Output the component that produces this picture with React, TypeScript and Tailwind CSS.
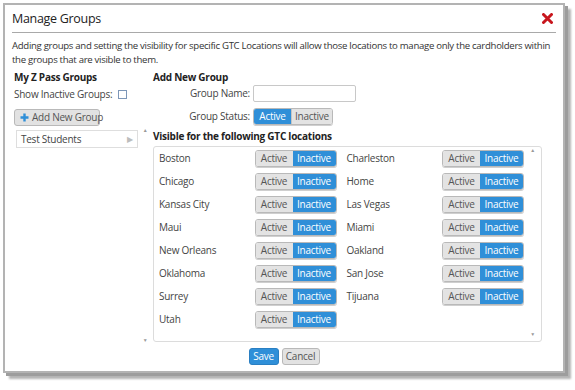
import React from "react";

const left = ["Boston", "Chicago", "Kansas City", "Maui", "New Orleans", "Oklahoma", "Surrey", "Utah"];
const right = ["Charleston", "Home", "Las Vegas", "Miami", "Oakland", "San Jose", "Tijuana"];

// two-part Active / Inactive switch
const Toggle = ({ active = false, wA = 37, wI = 43 }: { active?: boolean; wA?: number; wI?: number }) => (
  <div className="flex h-[17px] rounded-[3px] overflow-hidden border border-[#b9b9b9] shadow-[0_1px_0_#cfcfcf]">
    <div
      style={{ width: wA }}
      className={
        active
          ? "flex items-center justify-center bg-[#2f8fd8] text-white"
          : "flex items-center justify-center bg-[#e3e3e3] text-[#555]"
      }
    >
      Active
    </div>
    <div
      style={{ width: wI }}
      className={
        active
          ? "flex items-center justify-center bg-[#e3e3e3] text-[#555] border-l border-[#c4c4c4]"
          : "flex items-center justify-center bg-[#2f8fd8] text-white"
      }
    >
      Inactive
    </div>
  </div>
);

const Row = ({ name }: { name: string }) => (
  <div className="h-[23px] flex items-center">
    <span className="flex-1 text-[#444]">{name}</span>
    <Toggle />
  </div>
);

const ScrollArrows = () => (
  <div className="w-[8px] flex flex-col justify-between items-center py-[1px]">
    <span className="text-[5px] leading-none text-[#999]">▲</span>
    <span className="text-[5px] leading-none text-[#999]">▼</span>
  </div>
);

export default function App() {
  return (
    <div
      className="w-[575px] h-[390px] bg-white pt-[3px] pl-[3px] text-[10px] tracking-[-0.25px] text-[#333]"
      style={{ fontFamily: '"Open Sans", "Liberation Sans", sans-serif' }}
    >
      <div className="w-[562px] h-[370px] bg-white border-2 border-[#b3b3b3] shadow-[3px_3px_0_#9d9d9d,6px_6px_2px_#b4b4b4] px-[7px] flex flex-col">
        {/* Header */}
        <div className="h-[28px] flex items-center justify-between border-b border-[#a9a9a9]">
          <h1 className="text-[12.5px] tracking-[-0.3px] text-[#222] pt-[1px]">Manage Groups</h1>
          <svg width="11" height="11" viewBox="0 0 11 11" className="mr-[3px]">
            <path d="M1.5 1.5 L9.5 9.5 M9.5 1.5 L1.5 9.5" stroke="#c8161d" strokeWidth="3" strokeLinecap="round" />
          </svg>
        </div>

        <p className="mt-[6px] mr-[-6px] leading-[14px] text-[9.6px] tracking-[-0.3px] text-[#333] whitespace-nowrap">
          Adding groups and setting the visibility for specific GTC Locations will allow those locations to manage only the cardholders within
          <br />
          the groups that are visible to them.
        </p>

        <div className="flex mt-[2px] flex-1">
          {/* Left column */}
          <div className="w-[137px] flex flex-col">
            <div className="h-[17px] flex items-center pl-[2px] font-bold text-[#222]">My Z Pass Groups</div>
            <div className="h-[17px] flex items-center pl-[2px] text-[#444]">
              Show Inactive Groups:
              <span className="ml-[6px] w-[9px] h-[9px] border border-[#7d97b8] bg-white" />
            </div>
            <div className="mt-[6px] pl-[2px]">
              <button className="h-[17px] w-[86px] whitespace-nowrap flex items-center gap-[3px] pl-[5px] rounded-[3px] bg-[#e2e2e2] border border-[#b9b9b9] text-[#555]">
                <svg width="9" height="9" viewBox="0 0 9 9" className="shrink-0">
                  <path d="M4.5 0.5 V8.5 M0.5 4.5 H8.5" stroke="#2f8fd8" strokeWidth="2.4" />
                </svg>
                Add New Group
              </button>
            </div>
            <div className="flex flex-1 mt-[1px]">
              <div className="flex-1 pl-[4px] pt-[3px]">
                <div className="h-[18px] w-[122px] border border-[#dedede] flex items-center justify-between px-[4px] text-[#444]">
                  Test Students
                  <span className="text-[8px] text-[#bdbdbd]">▶</span>
                </div>
              </div>
              <ScrollArrows />
            </div>
          </div>

          {/* Right column */}
          <div className="flex-1 ml-[4px] flex flex-col">
            <div className="h-[17px] flex items-center font-bold text-[#222]">Add New Group</div>
            <div className="h-[17px] flex items-center -mt-[1px] mb-[1px]">
              <span className="w-[97px] text-right text-[#444]">Group Name:</span>
              <span className="ml-[3px] w-[103px] h-[17px] border border-[#c8c8c8] rounded-[2px] bg-white" />
            </div>
            <div className="h-[23px] flex items-center mt-[2px]">
              <span className="w-[97px] text-right text-[#444]">Group Status:</span>
              <div className="ml-[3px]">
                <Toggle active wA={37} wI={41} />
              </div>
            </div>
            <div className="h-[16px] flex items-center font-bold text-[#222]">Visible for the following GTC locations</div>
            <div className="mt-[2px] w-[389px] h-[196px] border border-[#dcdcdc] rounded-[3px] flex pl-[5px] pb-[3px]">
              <div className="flex-1 grid grid-cols-2 gap-x-[10px] content-start">
                <div className="flex flex-col">
                  {left.map((n) => (
                    <Row key={n} name={n} />
                  ))}
                </div>
                <div className="flex flex-col">
                  {right.map((n) => (
                    <Row key={n} name={n} />
                  ))}
                </div>
              </div>
              <div className="w-[17px] flex justify-center">
                <ScrollArrows />
              </div>
            </div>
          </div>
        </div>

        {/* Footer */}
        <div className="h-[27px] flex items-center justify-center gap-[3px] pb-[2px]">
          <button className="h-[17px] w-[30px] rounded-[3px] bg-[#2f8fd8] border border-[#2a7fc2] text-white">Save</button>
          <button className="h-[17px] w-[38px] rounded-[3px] bg-[#e2e2e2] border border-[#b9b9b9] text-[#555]">Cancel</button>
        </div>
      </div>
    </div>
  );
}
